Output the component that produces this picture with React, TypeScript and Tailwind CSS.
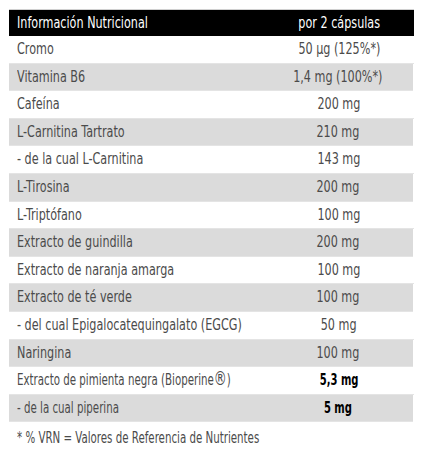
import React from "react";

interface Row {
  name: React.ReactNode;
  value: string;
  strong?: boolean;
  narrow?: boolean;
}

const rows: Row[] = [
  { name: "Cromo", value: "50 µg (125%*)" },
  { name: "Vitamina B6", value: "1,4 mg (100%*)" },
  { name: "Cafeína", value: "200 mg" },
  { name: "L-Carnitina Tartrato", value: "210 mg" },
  { name: "- de la cual L-Carnitina", value: "143 mg" },
  { name: "L-Tirosina", value: "200 mg" },
  { name: "L-Triptófano", value: "100 mg" },
  { name: "Extracto de guindilla", value: "200 mg" },
  { name: "Extracto de naranja amarga", value: "100 mg" },
  { name: "Extracto de té verde", value: "100 mg" },
  { name: "- del cual Epigalocatequingalato (EGCG)", value: "50 mg" },
  { name: "Naringina", value: "100 mg" },
  {
    name: (
      <>
        Extracto de pimienta negra (Bioperine<span className="text-[19px] leading-none">®</span>)
      </>
    ),
    value: "5,3 mg",
    strong: true,
    narrow: true,
  },
  { name: "- de la cual piperina", value: "5 mg", strong: true, narrow: true },
];

const App: React.FC = () => {
  return (
    <div
      className="w-[424px] h-[457px] bg-white pt-[9px] pl-[9px] pr-[10px] text-[15px] text-[#4b4b4b]"
      style={{ fontFamily: '"DejaVu Sans Condensed", "Liberation Sans", sans-serif' }}
    >
      {/* Header */}
      <div className="flex items-center h-[27px] bg-black text-white border-t border-[#d0d0d0]">
        <div className="flex-1 min-w-0 pl-[8px] whitespace-nowrap">
          <span className="inline-block origin-left scale-x-[0.83]">Información Nutricional</span>
        </div>
        <div className="w-[150px] shrink-0 text-center whitespace-nowrap">
          <span className="inline-block scale-x-[0.83]">por 2 cápsulas</span>
        </div>
      </div>

      {/* Rows */}
      {rows.map((row, i) => (
        <div
          key={i}
          className={`flex items-center h-[27.6px] border-b border-[#e4e4e4] ${
            i % 2 === 1 ? "bg-[#dbdbdb] mr-[1px]" : "bg-white"
          }`}
        >
          <div className="flex-1 min-w-0 pl-[8px] whitespace-nowrap">
            <span
              className={`inline-block origin-left ${row.narrow ? "scale-x-[0.76]" : "scale-x-[0.83]"}`}
            >
              {row.name}
            </span>
          </div>
          <div className="w-[150px] shrink-0 text-center whitespace-nowrap">
            {row.strong ? (
              <span className="inline-block scale-x-[0.74] text-black font-bold">{row.value}</span>
            ) : (
              <span className="inline-block scale-x-[0.83]">{row.value}</span>
            )}
          </div>
        </div>
      ))}

      {/* Footnote */}
      <div className="pl-[8px] pt-[5px] whitespace-nowrap">
        <span className="inline-block origin-left scale-x-[0.76]">
          * % VRN = Valores de Referencia de Nutrientes
        </span>
      </div>
    </div>
  );
};

export default App;
